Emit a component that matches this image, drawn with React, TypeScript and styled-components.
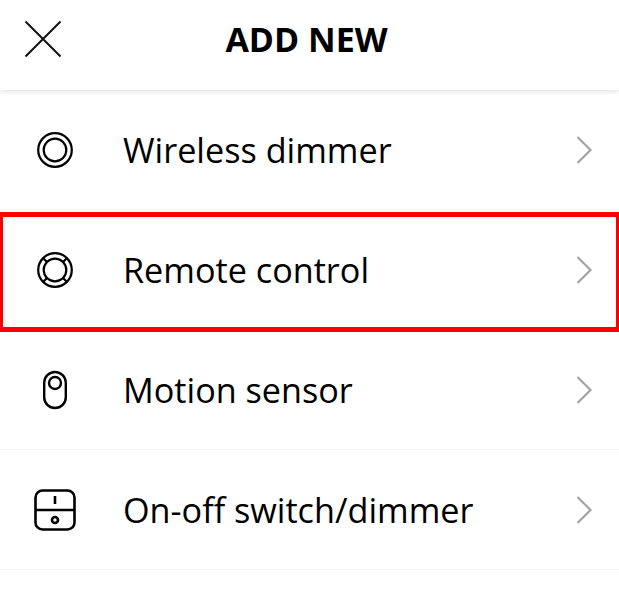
import styled, { createGlobalStyle } from 'styled-components';
import type { ReactNode } from 'react';

const GlobalStyle = createGlobalStyle`
  html, body {
    margin: 0;
    padding: 0;
    background: #fff;
    font-family: "Open Sans", "Liberation Sans", sans-serif;
  }
`;

const Page = styled.div`
  width: 619px;
  height: 605px;
  overflow: hidden;
  background: #fff;
`;

const Header = styled.header`
  position: relative;
  z-index: 1;
  display: grid;
  grid-template-columns: 86px 1fr 92px;
  align-items: center;
  box-sizing: border-box;
  height: 90px;
  padding-bottom: 12px;
  background: #fff;
  box-shadow: 0 1px 6px rgba(0, 0, 0, 0.14);
`;

const CloseButton = styled.div`
  display: flex;
  justify-content: center;
  color: #111;
`;

const Title = styled.h1`
  margin: 0;
  text-align: center;
  font-size: 34px;
  line-height: 46px;
  font-weight: 700;
  color: #000;
`;

const List = styled.div`
  display: flex;
  flex-direction: column;
`;

const Row = styled.div<{ $highlighted?: boolean }>`
  position: relative;
  display: flex;
  align-items: center;
  box-sizing: border-box;
  height: 120px;
  padding: 0 26px 0 34px;
  border-bottom: 1px solid #f6f6f6;

  ${({ $highlighted }) =>
    $highlighted &&
    `
    &::after {
      content: '';
      position: absolute;
      top: 2px;
      left: 0;
      right: 0;
      height: 120px;
      box-sizing: border-box;
      border: solid #ff0000;
      border-width: 5px 3px;
    }
  `}
`;

const IconSlot = styled.div`
  display: flex;
  justify-content: center;
  width: 42px;
  margin-right: 47px;
  color: #000;
`;

const Label = styled.span`
  flex: 1;
  font-size: 34.2px;
  line-height: 48px;
  color: #000;
`;

const Chevron = styled.svg`
  display: block;
  width: 18px;
  height: 30px;
  color: #a3a3a3;
`;

const Icon = ({ children, w = 42, h = 42, weight = 2.2 }: { children: ReactNode; w?: number; h?: number; weight?: number }) => (
    <svg width={w} height={h} viewBox={`0 0 ${w} ${h}`} fill="none" stroke="currentColor" strokeWidth={weight}>
        {children}
    </svg>
);

const devices = [
    {
        name: 'Wireless dimmer',
        icon: (
            <Icon w={38} h={38}>
                <circle cx="19" cy="19" r="16.8" />
                <circle cx="19" cy="19" r="11.3" />
            </Icon>
        ),
    },
    {
        name: 'Remote control',
        highlighted: true,
        icon: (
            <Icon w={38} h={38}>
                <circle cx="19" cy="19" r="16.8" />
                <circle cx="19" cy="19" r="11.3" />
                <path d="M7.5 7.5 11 11M30.5 7.5 27 11M7.5 30.5 11 27M30.5 30.5 27 27" />
            </Icon>
        ),
    },
    {
        name: 'Motion sensor',
        icon: (
            <Icon w={26} h={40} weight={2.4}>
                <rect x="2.2" y="2" width="21.6" height="36" rx="10.8" />
                <circle cx="13" cy="13" r="6" />
            </Icon>
        ),
    },
    {
        name: 'On-off switch/dimmer',
        icon: (
            <Icon w={42} h={42} weight={2.6}>
                <rect x="1.5" y="1.5" width="39" height="39" rx="7" />
                <path d="M1.5 21h39" />
                <path d="M21 7v8" />
                <circle cx="21" cy="31" r="3" />
            </Icon>
        ),
    },
];

export default function App() {
    return (
        <Page>
            <GlobalStyle />
            <Header>
                <CloseButton>
                    <svg width="38" height="38" viewBox="0 0 38 38" fill="none" stroke="currentColor" strokeWidth="2">
                        <path d="M1.5 1.5 36.5 36.5M36.5 1.5 1.5 36.5" />
                    </svg>
                </CloseButton>
                <Title>ADD NEW</Title>
            </Header>
            <List>
                {devices.map(device => (
                    <Row key={device.name} $highlighted={device.highlighted}>
                        <IconSlot>{device.icon}</IconSlot>
                        <Label>{device.name}</Label>
                        <Chevron viewBox="0 0 18 30" fill="none" stroke="currentColor" strokeWidth="2.2">
                            <path d="M2.5 2 15.5 15 2.5 28" />
                        </Chevron>
                    </Row>
                ))}
            </List>
        </Page>
    );
}
